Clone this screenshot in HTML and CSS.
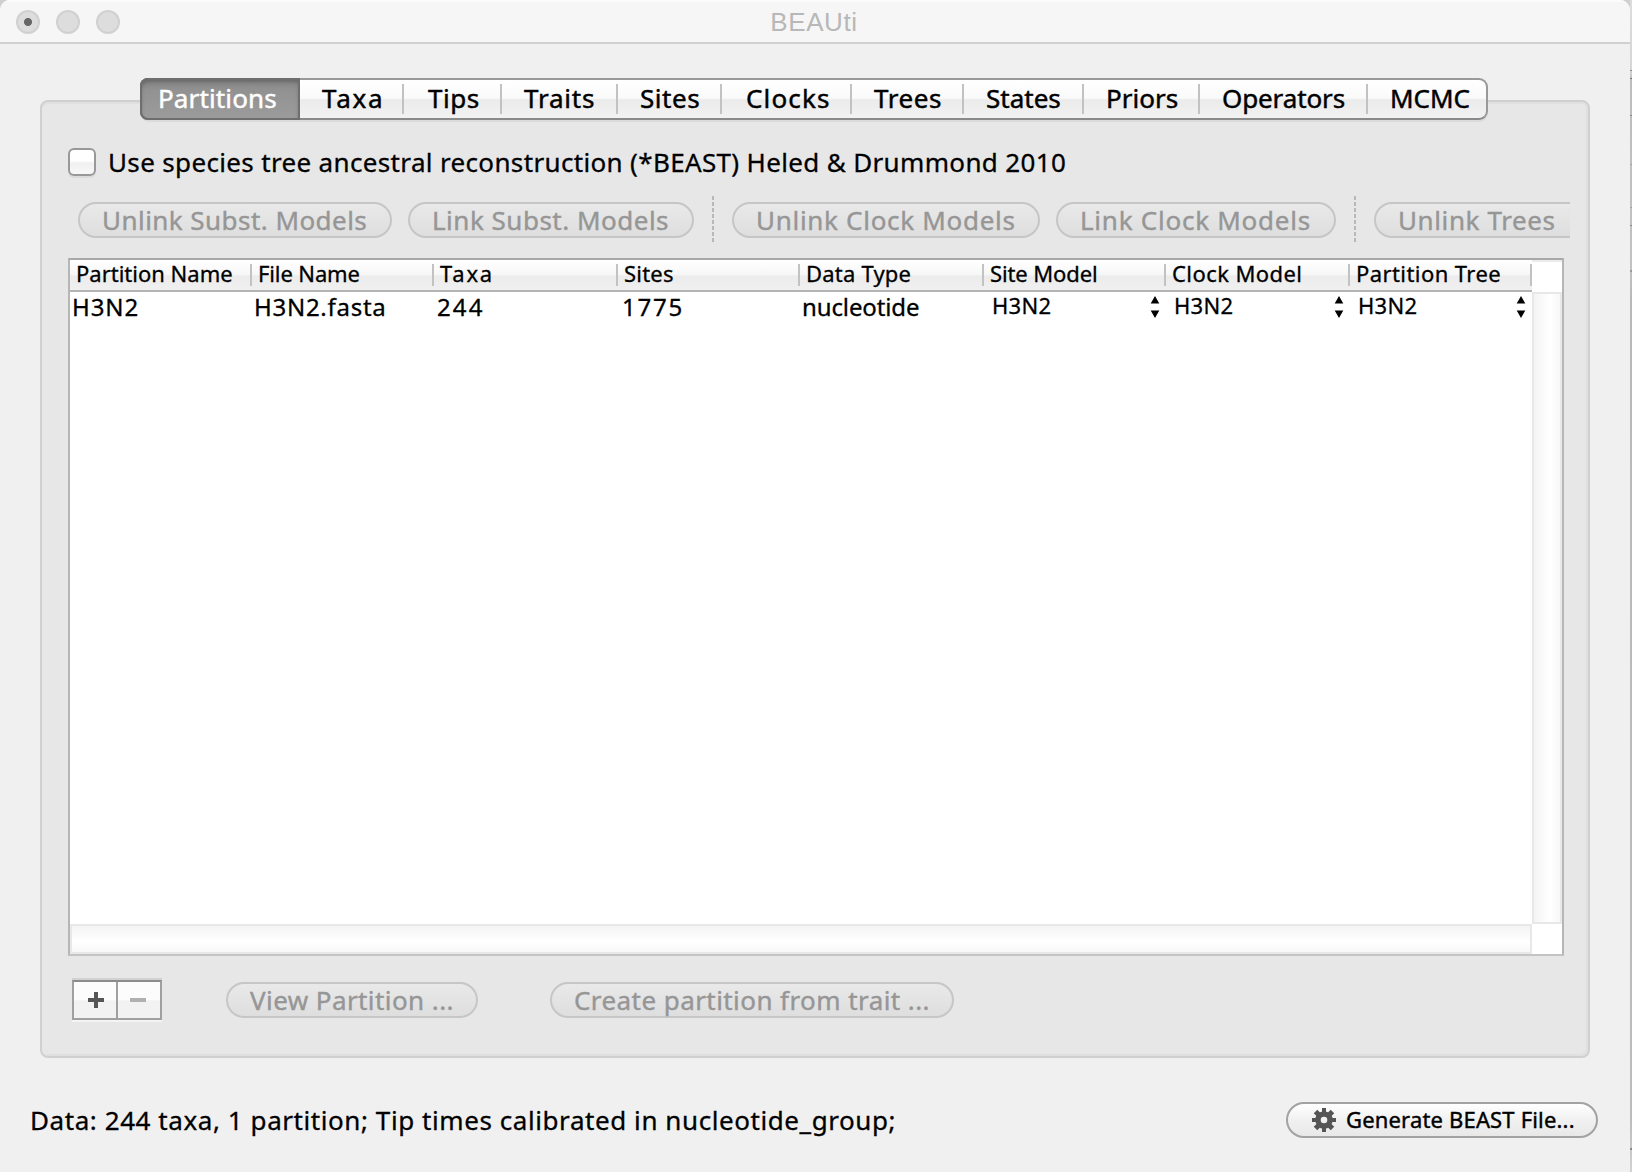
FILE: index.html
```html
<!DOCTYPE html>
<html lang="en">
<head>
<meta charset="utf-8">
<title>BEAUti</title>
<link rel="stylesheet" href="styles.css">
</head>
<body>
<div class="desktop">
<main class="window">
  <header class="titlebar">
    <div class="lights"><i class="light edited"></i><i class="light"></i><i class="light"></i></div>
    <h1 class="title">BEAUti</h1>
  </header>
  <section class="content">
    <nav class="tabs">
      <span class="tab selected">Partitions</span>
      <span class="tab ls-taxa">Taxa</span>
      <span class="tab ls-m wide">Tips</span>
      <span class="tab ls-traits">Traits</span>
      <span class="tab ls-m">Sites</span>
      <span class="tab ls-clocks wide">Clocks</span>
      <span class="tab ls-m">Trees</span>
      <span class="tab ls-0">States</span>
      <span class="tab ls-0">Priors</span>
      <span class="tab ls-op">Operators</span>
      <span class="tab ls-0">MCMC</span>
    </nav>
    <div class="panel">
      <label class="option"><i class="checkbox"></i><span>Use species tree ancestral reconstruction (*BEAST) Heled &amp; Drummond 2010</span></label>
      <div class="toolbar">
        <span class="button b-unlink-subst">Unlink Subst. Models</span>
        <span class="button b-link-subst">Link Subst. Models</span>
        <i class="divider"></i>
        <span class="button b-unlink-clock">Unlink Clock Models</span>
        <span class="button b-link-clock">Link Clock Models</span>
        <i class="divider"></i>
        <span class="button b-unlink-trees">Unlink Trees</span>
      </div>
      <div class="table">
        <div class="grid">
          <div class="row head">
            <span class="ls-0">Partition Name</span>
            <span class="ls-op">File Name</span>
            <span class="ls-taxa">Taxa</span>
            <span class="ls-s">Sites</span>
            <span class="ls-s">Data Type</span>
            <span class="ls-op">Site Model</span>
            <span class="ls-h">Clock Model</span>
            <span class="ls-h">Partition Tree</span>
          </div>
          <div class="row data">
            <span class="ls-n">H3N2</span>
            <span class="ls-file">H3N2.fasta</span>
            <span class="ls-xl">244</span>
            <span class="ls-taxa sites">1775</span>
            <span class="ls-op">nucleotide</span>
            <span class="combo">H3N2<svg width="10" height="22" viewBox="0 0 10 22"><path d="M5 0 9.300 7.600H.7ZM.7 14.400h8.600L5 22Z"/></svg></span>
            <span class="combo">H3N2<svg width="10" height="22" viewBox="0 0 10 22"><path d="M5 0 9.300 7.600H.7ZM.7 14.400h8.600L5 22Z"/></svg></span>
            <span class="combo">H3N2<svg width="10" height="22" viewBox="0 0 10 22"><path d="M5 0 9.300 7.600H.7ZM.7 14.400h8.600L5 22Z"/></svg></span>
          </div>
        </div>
        <div class="vcolumn"><div class="vtop"></div><div class="vscroll"></div></div>
        <div class="hscroll"></div>
        <div class="corner"></div>
      </div>
      <div class="actions">
        <div class="plusminus">
          <span class="pm"><svg width="16" height="16" viewBox="0 0 16 16"><path d="M6 0h4v6h6v4h-6v6H6v-6H0V6h6Z" fill="#555"/></svg></span>
          <span class="pm"><svg width="16" height="16" viewBox="0 0 16 16"><path d="M0 6h16v4H0Z" fill="#b0b0b0"/></svg></span>
        </div>
        <span class="button b-view">View Partition ...</span>
        <span class="button b-create">Create partition from trait ...</span>
      </div>
    </div>
  </section>
  <footer class="status">
    <span class="message">Data: 244 taxa, 1 partition; Tip times calibrated in nucleotide_group;</span>
    <span class="button enabled">
      <svg width="24" height="24" viewBox="-12 -12 24 24">
        <g fill="#555">
          <path d="M-2-12h4v6h-4ZM-2 6h4v6h-4ZM-12-2h6v4h-6ZM6-2h6v4H6Z"/>
          <path transform="rotate(45)" d="M-2.500-12h5v6h-5ZM-2.500 6h5v6h-5ZM-12-2.500h6v5h-6ZM6-2.500h6v5H6Z"/>
        </g>
        <circle r="6" fill="none" stroke="#555" stroke-width="5.400"/>
      </svg>
      <span>Generate BEAST File...</span>
    </span>
  </footer>
</main>
<aside class="edge"></aside>
</div>
</body>
</html>
```
FILE: styles.css
```css
* { box-sizing: border-box; }
body {
  margin: 0;
  width: 1632px;
  height: 1172px;
  overflow: hidden;
  background: #cfcfcf;
  font: 26px "Noto Sans", sans-serif;
  color: #000;
  white-space: nowrap;
  -webkit-text-stroke: 0.3px;
}
i { font-style: normal; display: block; }
svg { display: block; flex: none; }

.desktop { display: flex; height: 1172px; }
.window {
  width: 1630px;
  display: flex;
  flex-direction: column;
  background: #f0f0f0;
  border-radius: 10px 10px 0 0;
  overflow: hidden;
}
.edge {
  flex: 1;
  background:
    linear-gradient(#888, #888) 0 70px / 2px 1px no-repeat,
    linear-gradient(#777, #777) 0 78px / 2px 1px no-repeat,
    linear-gradient(#888, #888) 0 115px / 2px 1px no-repeat,
    linear-gradient(#a4a4a4, #a4a4a4) 0 164px / 2px 1px no-repeat,
    linear-gradient(#a4a4a4, #a4a4a4) 0 207px / 2px 1px no-repeat,
    linear-gradient(#888, #888) 0 225px / 2px 1px no-repeat,
    linear-gradient(#999, #999) 0 270px / 2px 2px no-repeat,
    linear-gradient(#888, #888) 0 1148px / 2px 2px no-repeat,
    linear-gradient(#dcdcdc 0, #d6d6d6 70px, #bdbdbd 80px, #c2c2c2 270px, #b8b8b8 300px, #bcbcbc 1120px, #d2d2d2 1172px);
}

.titlebar {
  height: 44px;
  display: grid;
  grid-template-columns: 152px 1fr 152px;
  padding-left: 16px;
  border-top: 2px solid #fbfbfb;
  border-bottom: 2px solid #d0d0d0;
  background: #f6f6f6;
}
.lights { display: flex; gap: 16px; padding-top: 8px; }
.light { width: 24px; height: 24px; border-radius: 50%; border: 2px solid #d0d0d0; background: #dddddd; }
.light.edited { background: radial-gradient(circle, #666 3.6px, #dddddd 4.4px); }
.title {
  margin: 0;
  text-align: center;
  font: 400 26px/41px "Liberation Sans", sans-serif;
  color: #b8b8b8;
  padding-right: 18px;
  letter-spacing: 0.6px;
  -webkit-text-stroke: 0;
}

.content { padding: 34px 40px 0; display: flex; flex-direction: column; }
.tabs {
  align-self: flex-start;
  position: relative;
  z-index: 1;
  margin-left: 100px;
  height: 42px;
  display: grid;
  grid-template-columns: 158px 104px 98px 116px 104px 130px 112px 120px 116px 168px 118px;
  border: 2px solid #999;
  border-bottom-color: #8a8a8a;
  border-radius: 9px;
  background: linear-gradient(#fff 0, #fafafa 48%, #ebebeb 52%, #f2f2f2 100%);
  box-shadow: 0 2px 0 #dadada;
  -webkit-text-stroke: 0.45px;
}
.tab {
  padding-left: 22px;
  line-height: 36px;
  background: linear-gradient(#c2c2c2, #c2c2c2) right center / 2px 30px no-repeat;
}
.tab.wide { padding-left: 24px; }
.tab:last-child { background: none; }
.tab.selected {
  margin: -2px 0 -2px -2px;
  padding: 2px 0 0 18px;
  width: 160px;
  color: #fff;
  letter-spacing: 0.13px;
  background: linear-gradient(#828282, #929292 30%, #9c9c9c);
  border-radius: 8px 0 0 8px;
  box-shadow: inset 0 0 0 2px #6e6e6e, inset 0 3px 5px #5c5c5c;
}
.ls-op { letter-spacing: -0.12px; }
.ls-0 { letter-spacing: 0; }
.ls-s { letter-spacing: 0.2px; }
.ls-h { letter-spacing: 0.42px; }
.ls-m { letter-spacing: 0.55px; }
.ls-traits { letter-spacing: 0.8px; }
.ls-clocks { letter-spacing: 1.15px; }
.ls-n { letter-spacing: 0.9px; }
.ls-taxa { letter-spacing: 1.8px; }
.ls-xl { letter-spacing: 2.1px; }
.ls-file { letter-spacing: 0.72px; }

.panel {
  width: 1550px;
  height: 958px;
  margin-top: -20px;
  padding: 46px 18px 0 26px;
  border: 2px solid #d0d0d0;
  border-radius: 8px;
  background: #e7e7e7;
  box-shadow: inset 0 2px 0 #e0e0e0, inset -2px -2px 0 #e0e0e0;
}
.option { display: flex; height: 28px; line-height: 28px; letter-spacing: 0.345px; }
.checkbox {
  width: 28px;
  height: 28px;
  margin-right: 12px;
  border: 2px solid #989898;
  border-radius: 6px;
  background: linear-gradient(#fff 45%, #f0f0f0 55%, #f8f8f8);
  box-shadow: 0 2px 0 #dadada;
}

.toolbar {
  height: 46px;
  margin-top: 20px;
  padding: 1px 0 0 10px;
  display: flex;
  align-items: center;
  overflow: hidden;
}
.button {
  flex: none;
  height: 36px;
  line-height: 32px;
  padding-left: 22px;
  border: 2px solid #c6c6c6;
  border-radius: 18px;
  background: linear-gradient(#e9e9e9, #dedede);
  color: #969696;
  -webkit-text-stroke: 0.4px;
}
.divider {
  width: 2px;
  height: 46px;
  margin: -1px 18px 0;
  flex: none;
  background: repeating-linear-gradient(#b8b8b8 0 4px, transparent 4px 6px);
}
.b-unlink-subst { width: 314px; letter-spacing: 0.45px; margin-right: 16px; }
.b-link-subst { width: 286px; letter-spacing: 0.5px; }
.b-unlink-clock { width: 308px; letter-spacing: 0.7px; margin-right: 16px; }
.b-link-clock { width: 280px; letter-spacing: 0.75px; }
.b-unlink-trees { width: 230px; letter-spacing: 0.61px; }

.table {
  width: 1496px;
  height: 698px;
  margin-top: 16px;
  display: grid;
  grid-template: 664px 30px / 1462px 30px;
  border: 2px solid #b6b6b6;
  border-top-color: #a8a8a8;
  border-bottom-color: #c4c4c4;
  background: #fff;
}
.row { display: grid; grid-template-columns: 182px 182px 184px 182px 184px 182px 184px 182px; }
.head {
  height: 32px;
  font-size: 22px;
  line-height: 27px;
  border-bottom: 2px solid #b4b4b4;
  background: linear-gradient(#fff 0, #f7f7f7 48%, #ececec 54%, #f0f0f0 100%);
}
.head span {
  padding-left: 6px;
  background: linear-gradient(#c2c2c2, #c2c2c2) right 4px / 2px 22px no-repeat;
}
.data { height: 30px; font-size: 24px; line-height: 30px; }
.data span { padding-left: 2px; }
.data span:nth-child(3) { padding-left: 3px; }
.data .sites { padding-left: 4px; }
.data .combo {
  display: flex;
  justify-content: space-between;
  font-size: 22px;
  line-height: 27px;
  letter-spacing: 0.3px;
  padding: 0 6px 0 8px;
}
.combo svg { margin-top: 4px; }
.vcolumn { display: flex; flex-direction: column; }
.vtop { height: 32px; border-top: 2px solid #ececec; }
.vscroll {
  flex: 1;
  border: 2px solid #e8e8e8;
  background: linear-gradient(90deg, #f4f4f4, #fff 60%, #f8f8f8);
}
.hscroll {
  border: 2px solid #e8e8e8;
  background: linear-gradient(#f4f4f4, #fff 60%, #f8f8f8);
}

.actions { display: flex; align-items: center; height: 44px; margin-top: 22px; padding-left: 4px; }
.plusminus {
  width: 90px;
  height: 40px;
  display: grid;
  grid-template-columns: 44px 42px;
  border: 2px solid #a0a0a0;
  border-top-color: #8c8c8c;
  background: linear-gradient(#fcfcfc 50%, #f2f2f2 52%);
  box-shadow: 0 -2px 0 #d2d2d2, 0 2px 0 #f4f4f4;
}
.pm { display: flex; align-items: center; justify-content: center; }
.pm:first-child { border-right: 2px solid #a0a0a0; padding-left: 2px; }
.pm:last-child { padding-right: 2px; }
.b-view { width: 252px; margin-left: 64px; letter-spacing: 0.42px; }
.b-create { width: 404px; margin-left: 72px; letter-spacing: 0.43px; }

.status {
  display: flex;
  align-items: center;
  justify-content: space-between;
  height: 36px;
  margin-top: 44px;
  padding: 0 32px 0 30px;
}
.message { letter-spacing: 0.57px; }
.enabled {
  width: 312px;
  display: flex;
  align-items: center;
  gap: 10px;
  padding-left: 24px;
  font-size: 22px;
  line-height: 30px;
  letter-spacing: 0.17px;
  color: #000;
  border-color: #a2a2a2;
  background: linear-gradient(#fff, #f2f2f2 45%, #e8e8e8);
}
.enabled span { margin-top: -2px; }
```
